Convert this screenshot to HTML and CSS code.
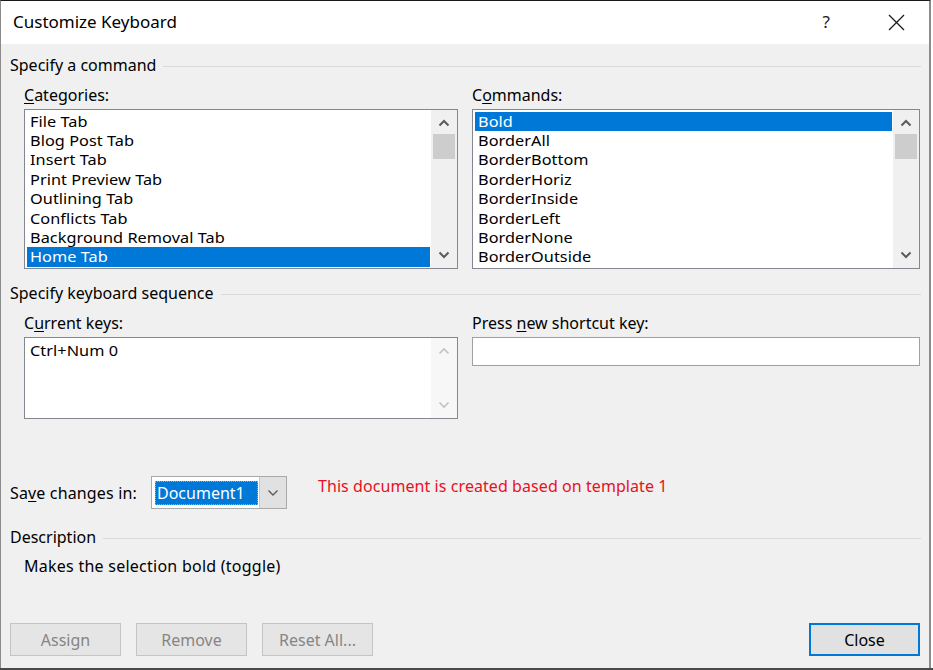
FILE: index.html
```html
<!DOCTYPE html>
<html>
<head>
<meta charset="utf-8">
<link rel="stylesheet" href="styles.css">
</head>
<body>
<div class="window">
  <div class="titlebar">
    <span class="title">Customize Keyboard</span>
    <span class="help">?</span>
    <svg class="close-x" width="17" height="17" viewBox="0 0 17 17"><path d="M1 1 L16 16 M16 1 L1 16" stroke="#1a1a1a" stroke-width="1.3" fill="none"/></svg>
  </div>
  <div class="content">
    <div class="group g1"><span>Specify a command</span><div class="rule"></div></div>
    <div class="cols">
      <div class="col left">
        <div class="label"><u>C</u>ategories:</div>
        <div class="listbox">
          <div class="items">
            <div class="item"><span>File Tab</span></div>
            <div class="item"><span>Blog Post Tab</span></div>
            <div class="item"><span>Insert Tab</span></div>
            <div class="item"><span>Print Preview Tab</span></div>
            <div class="item"><span>Outlining Tab</span></div>
            <div class="item"><span>Conflicts Tab</span></div>
            <div class="item"><span>Background Removal Tab</span></div>
            <div class="item sel"><span>Home Tab</span></div>
          </div>
          <div class="vscroll">
            <svg class="arr" width="12" height="8" viewBox="0 0 12 8"><path d="M1.5 6.5 L6 2 L10.5 6.5" stroke="#5a5a5a" stroke-width="2" fill="none"/></svg>
            <div class="thumb"></div>
            <div class="track"></div>
            <svg class="arr" width="12" height="8" viewBox="0 0 12 8"><path d="M1.5 1.5 L6 6 L10.5 1.5" stroke="#5a5a5a" stroke-width="2" fill="none"/></svg>
          </div>
        </div>
      </div>
      <div class="col right">
        <div class="label">C<u>o</u>mmands:</div>
        <div class="listbox">
          <div class="items">
            <div class="item sel"><span>Bold</span></div>
            <div class="item"><span>BorderAll</span></div>
            <div class="item"><span>BorderBottom</span></div>
            <div class="item"><span>BorderHoriz</span></div>
            <div class="item"><span>BorderInside</span></div>
            <div class="item"><span>BorderLeft</span></div>
            <div class="item"><span>BorderNone</span></div>
            <div class="item"><span>BorderOutside</span></div>
          </div>
          <div class="vscroll">
            <svg class="arr" width="12" height="8" viewBox="0 0 12 8"><path d="M1.5 6.5 L6 2 L10.5 6.5" stroke="#5a5a5a" stroke-width="2" fill="none"/></svg>
            <div class="thumb"></div>
            <div class="track"></div>
            <svg class="arr" width="12" height="8" viewBox="0 0 12 8"><path d="M1.5 1.5 L6 6 L10.5 1.5" stroke="#5a5a5a" stroke-width="2" fill="none"/></svg>
          </div>
        </div>
      </div>
    </div>
    <div class="group g2"><span>Specify keyboard sequence</span><div class="rule"></div></div>
    <div class="cols">
      <div class="col left">
        <div class="label">C<u>u</u>rrent keys:</div>
        <div class="keysbox">
          <div class="items keys"><div class="item"><span>Ctrl+Num 0</span></div></div>
          <div class="vscroll dis">
            <svg class="arr" width="12" height="8" viewBox="0 0 12 8"><path d="M1.5 6.5 L6 2 L10.5 6.5" stroke="#c2c2c2" stroke-width="1.6" fill="none"/></svg>
            <div class="track"></div>
            <svg class="arr" width="12" height="8" viewBox="0 0 12 8"><path d="M1.5 1.5 L6 6 L10.5 1.5" stroke="#c2c2c2" stroke-width="1.6" fill="none"/></svg>
          </div>
        </div>
      </div>
      <div class="col right">
        <div class="label">Press <u>n</u>ew shortcut key:</div>
        <div class="textbox"></div>
      </div>
    </div>
    <div class="saverow">
      <span class="savelabel">Sa<u>v</u>e changes in:</span>
      <div class="combo">
        <div class="combo-field"><span class="combo-sel">Document1</span></div>
        <div class="combo-btn"><svg width="12" height="8" viewBox="0 0 12 8"><path d="M1.5 1.5 L6 6 L10.5 1.5" stroke="#5a5a5a" stroke-width="1.4" fill="none"/></svg></div>
      </div>
      <span class="note">This document is created based on template 1</span>
    </div>
    <div class="group g3"><span>Description</span><div class="rule"></div></div>
    <div class="desc">Makes the selection bold (toggle)</div>
    <div class="buttons">
      <div class="btn disabled">Assign</div>
      <div class="btn disabled">Remove</div>
      <div class="btn disabled">Reset All...</div>
      <div class="spacer"></div>
      <div class="btn default">Close</div>
    </div>
  </div>
</div>
<div class="below"></div>
</body>
</html>
```
FILE: styles.css
```css
html, body {
  margin: 0;
  padding: 0;
  background: #ffffff;
  overflow: hidden;
}
body {
  font-family: "Segoe UI", "Noto Sans", "Open Sans", sans-serif;
  font-size: 16px;
  color: #000;
}
.window {
  height: 668px;
  width: 931px;
  border-top: 1px solid #1a1a1a;
  border-left: 1px solid #8a8a8a;
  border-right: 2px solid #8c8c8c;
  background: #f0f0f0;
  display: flex;
  flex-direction: column;
  box-sizing: border-box;
}
.below {
  height: 2px;
  background: #4a4a4a;
  width: 933px;
}
.titlebar {
  height: 43px;
  background: #fff;
  display: flex;
  align-items: center;
  flex-shrink: 0;
  padding-bottom: 3px;
  box-sizing: border-box;
}
.title {
  margin-left: 12px;
  font-size: 17px;
  flex: 1;
}
.help {
  font-size: 17px;
  margin-right: 58px;
  color: #1a1a1a;
}
.close-x {
  margin-right: 24px;
  margin-top: 2px;
}
.content {
  padding: 0 8px 0 9px;
  display: flex;
  flex-direction: column;
  flex: 1;
}
.group {
  display: flex;
  align-items: center;
  height: 20px;
  line-height: 20px;
}
.group .rule {
  flex: 1;
  border-top: 1px solid #d9d9d9;
  margin-left: 7px;
  margin-top: 2px;
}
.g1 { margin-top: 11px; }
.g2 { margin-top: 14px; }
.g3 { margin-top: 18px; }
.cols {
  display: flex;
  gap: 14px;
  padding-left: 14px;
}
.col.left { width: 434px; }
.col.right { width: 448px; }
.label {
  margin-top: 10px;
  height: 20px;
  line-height: 20px;
  margin-bottom: 4px;
}
u { text-decoration-thickness: 1px; text-underline-offset: 2px; }
.listbox, .keysbox {
  height: 160px;
  box-sizing: border-box;
  border: 1px solid #828790;
  background: #fff;
  display: flex;
}
.keysbox { height: 82px; }
.items {
  flex: 1;
  padding: 1.5px 1px 0 2px;
}
.item {
  height: 19.43px;
  line-height: 19.43px;
  padding-left: 3px;
  white-space: nowrap;
  font-size: 15px;
}
.item span {
  display: inline-block;
  transform: scaleX(1.085);
  transform-origin: 0 50%;
  letter-spacing: 0.05px;
}
.item.sel {
  background: #0078d7;
  color: #fff;
}
.keys { padding-top: 3px; }
.vscroll {
  width: 26px;
  background: #f0f0f0;
  display: flex;
  flex-direction: column;
  align-items: center;
  padding: 0 1px;
  box-sizing: border-box;
}
.vscroll.dis { background: #f7f7f7; }
.arr {
  flex-shrink: 0;
  margin: 9px 0;
}
.thumb {
  width: 22px;
  height: 25px;
  background: #cdcdcd;
  margin-top: -2px;
}
.track { flex: 1; }
.textbox {
  height: 29px;
  box-sizing: border-box;
  border: 1px solid #a0a0a0;
  background: #fff;
}
.saverow {
  margin-top: 57px;
  height: 33px;
  display: flex;
  align-items: center;
}
.savelabel {
  width: 141px;
  flex-shrink: 0;
  padding-top: 1px;
  letter-spacing: 0.15px;
}
.combo {
  width: 136px;
  height: 33px;
  box-sizing: border-box;
  border: 1px solid #a9a9a9;
  background: #fff;
  display: flex;
  padding: 4px 1px 3px 3px;
}
.combo-field {
  flex: 1;
  display: flex;
}
.combo-sel {
  background: #0078d7;
  color: #fff;
  outline: 1px dotted #e0a050;
  outline-offset: -1px;
  width: 103px;
  box-sizing: border-box;
  padding-left: 2px;
  line-height: 24px;
  font-size: 16px;
}
.combo-btn {
  width: 26px;
  margin: -4px -1px -3px 0;
  background: #e1e1e1;
  border-left: 1px solid #c8c8c8;
  display: flex;
  align-items: center;
  justify-content: center;
}
.note {
  color: #e81123;
  font-size: 16px;
  margin-left: 31px;
  margin-top: -13px;
  letter-spacing: 0.07px;
}
.desc {
  margin-top: 9px;
  padding-left: 14px;
  line-height: 20px;
  letter-spacing: 0.25px;
}
.buttons {
  margin-top: 47px;
  display: flex;
  gap: 15px;
  padding-right: 1px;
}
.spacer { flex: 1; }
.btn {
  width: 111px;
  height: 33px;
  box-sizing: border-box;
  border: 1px solid #adadad;
  background: #e1e1e1;
  display: flex;
  align-items: center;
  justify-content: center;
}
.btn.disabled {
  background: #e5e5e5;
  border-color: #c4c4c4;
  color: #858585;
}
.btn.default {
  border: 2px solid #0078d7;
}
```
